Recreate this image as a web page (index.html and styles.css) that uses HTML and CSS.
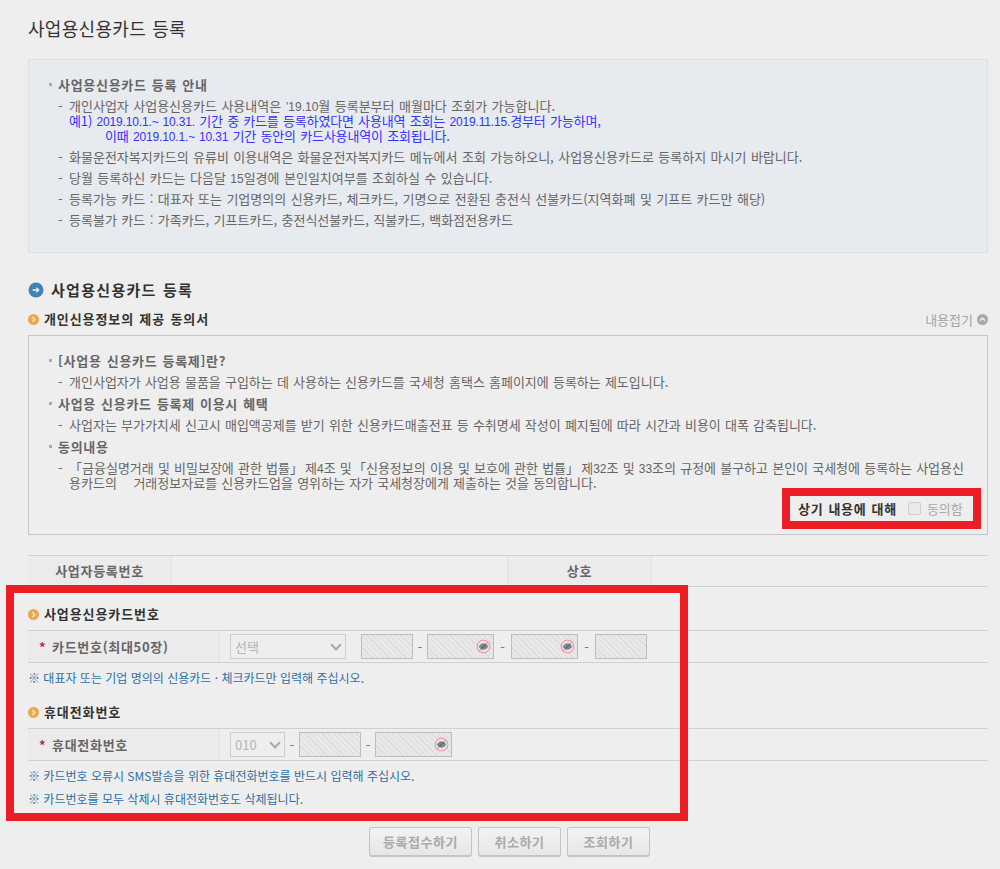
FILE: index.html
```html
<!DOCTYPE html>
<html lang="ko">
<head>
  <meta charset="UTF-8">
  <title>사업용신용카드 등록</title>
  <link rel="stylesheet" href="styles.css">
</head>
<body>
  <div class="page">
    <h1 class="page-title">사업용신용카드 등록</h1>

    <div class="info-box">
      <p class="bullet-title">사업용신용카드 등록 안내</p>
      <ul class="dash-list">
        <li>개인사업자 사업용신용카드 사용내역은 <span class="num">’19.10</span>월 등록분부터 매월마다 조회가 가능합니다.
          <span class="blue-line">예1) <span class="num">2019.10.1.~ 10.31.</span> 기간 중 카드를 등록하였다면 사용내역 조회는 <span class="num">2019.11.15.</span>경부터 가능하며,</span>
          <span class="blue-line indent">이때 <span class="num">2019.10.1.~ 10.31</span> 기간 동안의 카드사용내역이 조회됩니다.</span>
        </li>
        <li>화물운전자복지카드의 유류비 이용내역은 화물운전자복지카드 메뉴에서 조회 가능하오니, 사업용신용카드로 등록하지 마시기 바랍니다.</li>
        <li>당월 등록하신 카드는 다음달 <span class="num">15</span>일경에 본인일치여부를 조회하실 수 있습니다.</li>
        <li>등록가능 카드 : 대표자 또는 기업명의의 신용카드, 체크카드, 기명으로 전환된 충전식 선불카드(지역화폐 및 기프트 카드만 해당)</li>
        <li>등록불가 카드 : 가족카드, 기프트카드, 충전식선불카드, 직불카드, 백화점전용카드</li>
      </ul>
    </div>

    <h2 class="section-title">
      <svg class="icon-arrow" width="16" height="16" viewBox="0 0 16 16"><circle cx="8" cy="8" r="7.5" fill="#4383b3"/><path d="M4.5 8h6M8.3 5.8 10.6 8 8.3 10.2" fill="none" stroke="#e8eef3" stroke-width="1.4"/></svg>
      사업용신용카드 등록
    </h2>

    <div class="sub-head">
      <h3 class="sub-title">
        <svg class="icon-chev" width="11" height="11" viewBox="0 0 11 11"><circle cx="5.5" cy="5.5" r="5.5" fill="#eda64a"/><path d="M4.2 3 6.8 5.5 4.2 8" fill="none" stroke="#fbeed9" stroke-width="1.3"/></svg>
        개인신용정보의 제공 동의서
      </h3>
      <span class="fold-link">내용접기
        <svg width="11" height="11" viewBox="0 0 11 11"><circle cx="5.5" cy="5.5" r="5.5" fill="#a8a8a8"/><path d="M3 6.6 5.5 4.2 8 6.6" fill="none" stroke="#eee" stroke-width="1.6"/></svg>
      </span>
    </div>

    <div class="agree-box">
      <p class="bullet-title">[사업용 신용카드 등록제]란?</p>
      <ul class="dash-list tight"><li>개인사업자가 사업용 물품을 구입하는 데 사용하는 신용카드를 국세청 홈택스 홈페이지에 등록하는 제도입니다.</li></ul>
      <p class="bullet-title">사업용 신용카드 등록제 이용시 혜택</p>
      <ul class="dash-list tight"><li>사업자는 부가가치세 신고시 매입액공제를 받기 위한 신용카드매출전표 등 수취명세 작성이 폐지됨에 따라 시간과 비용이 대폭 감축됩니다.</li></ul>
      <p class="bullet-title">동의내용</p>
      <ul class="dash-list tight"><li>「금융실명거래 및 비밀보장에 관한 법률<span class="kb">」</span> 제<span class="num">4</span>조 및 <span class="kb-open">「</span>신용정보의 이용 및 보호에 관한 법률<span class="kb">」</span> 제<span class="num">32</span>조 및 <span class="num">33</span>조의 규정에 불구하고 본인이 국세청에 등록하는 사업용신<br>용카드의 &nbsp; &nbsp;거래정보자료를 신용카드업을 영위하는 자가 국세청장에게 제출하는 것을 동의합니다.</li></ul>
      <div class="agree-check">
        <strong>상기 내용에 대해</strong>
        <span class="fake-check"></span>
        <span class="check-label">동의함</span>
      </div>
    </div>

    <div class="biz-table">
      <div class="th biz-th1">사업자등록번호</div>
      <div class="td biz-td1"></div>
      <div class="th biz-th2">상호</div>
    </div>

    <h3 class="sub-title form-head">
      <svg class="icon-chev" width="11" height="11" viewBox="0 0 11 11"><circle cx="5.5" cy="5.5" r="5.5" fill="#eda64a"/><path d="M4.2 3 6.8 5.5 4.2 8" fill="none" stroke="#fbeed9" stroke-width="1.3"/></svg>
      사업용신용카드번호
    </h3>
    <div class="form-row">
      <div class="row-label"><i class="star">*</i>카드번호(최대50장)</div>
      <div class="row-fields">
        <span class="fake-select w116">선택</span>
        <span class="fake-input w52 first"></span>
        <span class="dash small">-</span>
        <span class="fake-input w67"><svg class="eye" viewBox="0 0 16 16"><use href="#eye-off"/></svg></span>
        <span class="dash">-</span>
        <span class="fake-input w67"><svg class="eye" viewBox="0 0 16 16"><use href="#eye-off"/></svg></span>
        <span class="dash">-</span>
        <span class="fake-input w52"></span>
      </div>
    </div>
    <p class="note">※ 대표자 또는 기업 명의의 신용카드 · 체크카드만 입력해 주십시오.</p>

    <h3 class="sub-title form-head">
      <svg class="icon-chev" width="11" height="11" viewBox="0 0 11 11"><circle cx="5.5" cy="5.5" r="5.5" fill="#eda64a"/><path d="M4.2 3 6.8 5.5 4.2 8" fill="none" stroke="#fbeed9" stroke-width="1.3"/></svg>
      휴대전화번호
    </h3>
    <div class="form-row">
      <div class="row-label"><i class="star">*</i>휴대전화번호</div>
      <div class="row-fields">
        <span class="fake-select w55">010</span>
        <span class="dash small">-</span>
        <span class="fake-input w62"></span>
        <span class="dash small">-</span>
        <span class="fake-input w77"><svg class="eye" viewBox="0 0 16 16"><use href="#eye-off"/></svg></span>
      </div>
    </div>
    <p class="note">※ 카드번호 오류시 SMS발송을 위한 휴대전화번호를 반드시 입력해 주십시오.</p>
    <p class="note next">※ 카드번호를 모두 삭제시 휴대전화번호도 삭제됩니다.</p>

    <div class="btn-row">
      <button class="btn btn-long" disabled>등록접수하기</button>
      <button class="btn" disabled>취소하기</button>
      <button class="btn" disabled>조회하기</button>
    </div>
  </div>

  <!-- 캡처 위에 표시한 빨간 박스 -->
  <div class="red-mark mark-agree"></div>
  <div class="red-mark mark-form"></div>

  <svg width="0" height="0" class="defs">
    <symbol id="eye-off" viewBox="0 0 16 16">
      <path d="M2.8 8C4.6 5.400 6.200 4.500 8 4.500s3.400 .9 5.200 3.500c-1.800 2.600-3.400 3.500-5.200 3.500S4.600 10.600 2.800 8z" fill="#7f8890"/>
      <circle cx="8" cy="8" r="6.800" fill="none" stroke="#f4858a" stroke-width="1"/>
      <path d="M3.200 12.800 12.800 3.200" stroke="#f4858a" stroke-width="1"/>
      <path d="M5.500 10.500 10.500 5.500" stroke="#5a626a" stroke-width="1.400"/>
    </symbol>
  </svg>
</body>
</html>
```

FILE: styles.css
```css
* {
  box-sizing: border-box;
}

html, body {
  margin: 0;
  padding: 0;
}

body {
  position: relative;
  height: 869px;
  overflow: hidden;
  background: #eeeeee;
  color: #666;
  font-family: "Noto Sans CJK KR", "Liberation Sans", sans-serif;
  font-size: 13px;
  line-height: 15px;
  word-spacing: 0.8px;
}

.page {
  width: 960px;
  margin-left: 28px;
}

.page-title {
  margin: 0;
  padding-top: 17px;
  height: 59px;
  font-size: 18px;
  line-height: 23px;
  font-weight: 400;
  letter-spacing: 0.3px;
  color: #333;
}

/* 숫자는 폭이 좁은 글꼴로 */
.num {
  font-family: "Liberation Sans", sans-serif;
  font-size: 12px;
  line-height: 0;
}

.kb {
  letter-spacing: -2px;
}

.kb-open {
  margin-left: -3px;
}

/* 안내 박스 */
.info-box {
  height: 194px;
  padding-top: 17px;
  background: #e7eaef;
  border: 1px solid #dcdfe4;
}

.bullet-title {
  position: relative;
  margin: 0;
  padding-left: 29px;
  height: 15px;
  font-weight: 700;
  letter-spacing: 0.7px;
  color: #666;
}

.bullet-title::before {
  content: "";
  position: absolute;
  left: 20px;
  top: 6px;
  width: 3px;
  height: 3px;
  background: #aaa;
}

.dash-list {
  list-style: none;
  margin: 6px 0 0;
  padding: 0 0 0 40px;
}

.dash-list li {
  position: relative;
  margin-bottom: 6px;
}

.dash-list li::before {
  content: "-";
  position: absolute;
  left: -11px;
}

.dash-list.tight {
  margin-bottom: 7px;
  word-spacing: 0.5px;
}

.blue-line {
  display: block;
  letter-spacing: -0.15px;
  color: #3333ff;
}

.blue-line.indent {
  padding-left: 36px;
}

.section-title {
  display: flex;
  align-items: center;
  gap: 7px;
  margin: 27px 0 0;
  height: 20px;
  font-size: 15px;
  line-height: 20px;
  letter-spacing: 1.3px;
  color: #333;
}

.sub-head {
  display: flex;
  justify-content: space-between;
  align-items: center;
  margin-top: 11px;
  height: 16px;
}

.sub-title {
  display: flex;
  align-items: center;
  gap: 5px;
  margin: 0;
  font-size: 13px;
  line-height: 16px;
  letter-spacing: 0.9px;
  color: #333;
}

.fold-link {
  display: flex;
  align-items: center;
  gap: 4px;
  color: #a5a5a5;
}

.agree-box {
  position: relative;
  margin-top: 8px;
  height: 200px;
  padding-top: 17px;
  border: 1px solid #c4c4c4;
}

.agree-check {
  position: absolute;
  right: 14px;
  top: 160px;
  width: 183px;
  height: 25px;
  display: flex;
  align-items: center;
  padding-left: 8px;
  white-space: nowrap;
}

.agree-check strong {
  letter-spacing: 0.7px;
  color: #333;
}

.fake-check {
  flex: none;
  width: 13px;
  height: 13px;
  margin: 0 6px 0 11px;
  border: 1px solid #d0d0d0;
  border-radius: 2px;
  background: #e9e9e9;
}

.check-label {
  color: #a9a9a9;
}

.biz-table {
  display: flex;
  margin-top: 20px;
  height: 32px;
  border-top: 1px solid #d0d0d0;
  border-bottom: 1px solid #d0d0d0;
}

.th {
  height: 100%;
  background: #ebebeb;
  font-weight: 700;
  letter-spacing: 0.7px;
  text-align: center;
  line-height: 30px;
  border-right: 1px solid #e2e2e2;
}

.biz-th1 {
  width: 144px;
}

.biz-td1 {
  width: 335px;
}

.biz-th2 {
  width: 145px;
  border-left: 1px solid #e2e2e2;
}

.form-head {
  margin-top: 19px;
  height: 16px;
}

.form-row {
  display: flex;
  margin-top: 8px;
  height: 33px;
  border-top: 1px solid #d0d0d0;
  border-bottom: 1px solid #d0d0d0;
}

.row-label {
  display: flex;
  align-items: center;
  width: 192px;
  padding-left: 11px;
  background: #ebebeb;
  border-right: 1px solid #e2e2e2;
  font-weight: 700;
  letter-spacing: 0.7px;
}

.star {
  width: 13px;
  font-style: normal;
  color: #b5323a;
}

.row-fields {
  display: flex;
  align-items: center;
  padding-left: 10px;
}

.fake-select {
  position: relative;
  display: block;
  height: 25px;
  line-height: 23px;
  padding-left: 4px;
  color: #b5b5b5;
  border: 1px solid #cecece;
}

.fake-select::after {
  content: "";
  position: absolute;
  right: 5px;
  top: 6px;
  width: 6px;
  height: 6px;
  border-right: 2px solid #aaa;
  border-bottom: 2px solid #aaa;
  transform: rotate(45deg);
}

.fake-input {
  position: relative;
  display: block;
  height: 25px;
  border: 1px solid #bdbdbd;
  background: repeating-linear-gradient(45deg, #e8e8e8 0 3px, #dcdcdc 3px 4px);
}

.first {
  margin-left: 15px;
}

.w116 { width: 116px; }
.w55 { width: 55px; }
.w52 { width: 52px; }
.w62 { width: 62px; }
.w67 { width: 67px; }
.w77 { width: 77px; }

.dash {
  width: 17px;
  text-align: center;
  color: #777;
}

.dash.small {
  width: 14px;
}

.eye {
  position: absolute;
  right: 2px;
  top: 4px;
  width: 15px;
  height: 15px;
}

.note {
  margin: 7px 0 0;
  font-size: 12px;
  word-spacing: 0;
  color: #2f6f9f;
}

.note.next {
  margin-top: 8px;
}

.btn-row {
  display: flex;
  gap: 6px;
  margin: 21px 0 0 341px;
}

.btn {
  width: 83px;
  height: 30px;
  padding: 0;
  border: 1px solid #c4c4c4;
  border-bottom-width: 2px;
  border-radius: 3px;
  background: linear-gradient(#f3f3f3, #e6e6e6);
  color: #aaa;
  font: 700 13px "Noto Sans CJK KR", "Liberation Sans", sans-serif;
  letter-spacing: 0.5px;
}

.btn-long {
  width: 103px;
}

/* 빨간 표시 */
.red-mark {
  position: absolute;
  border: 8px solid #ee1c25;
  pointer-events: none;
}

.mark-agree {
  left: 782px;
  top: 488px;
  width: 199px;
  height: 41px;
}

.mark-form {
  left: 6px;
  top: 585px;
  width: 682px;
  height: 236px;
}

.defs {
  position: absolute;
}
```
